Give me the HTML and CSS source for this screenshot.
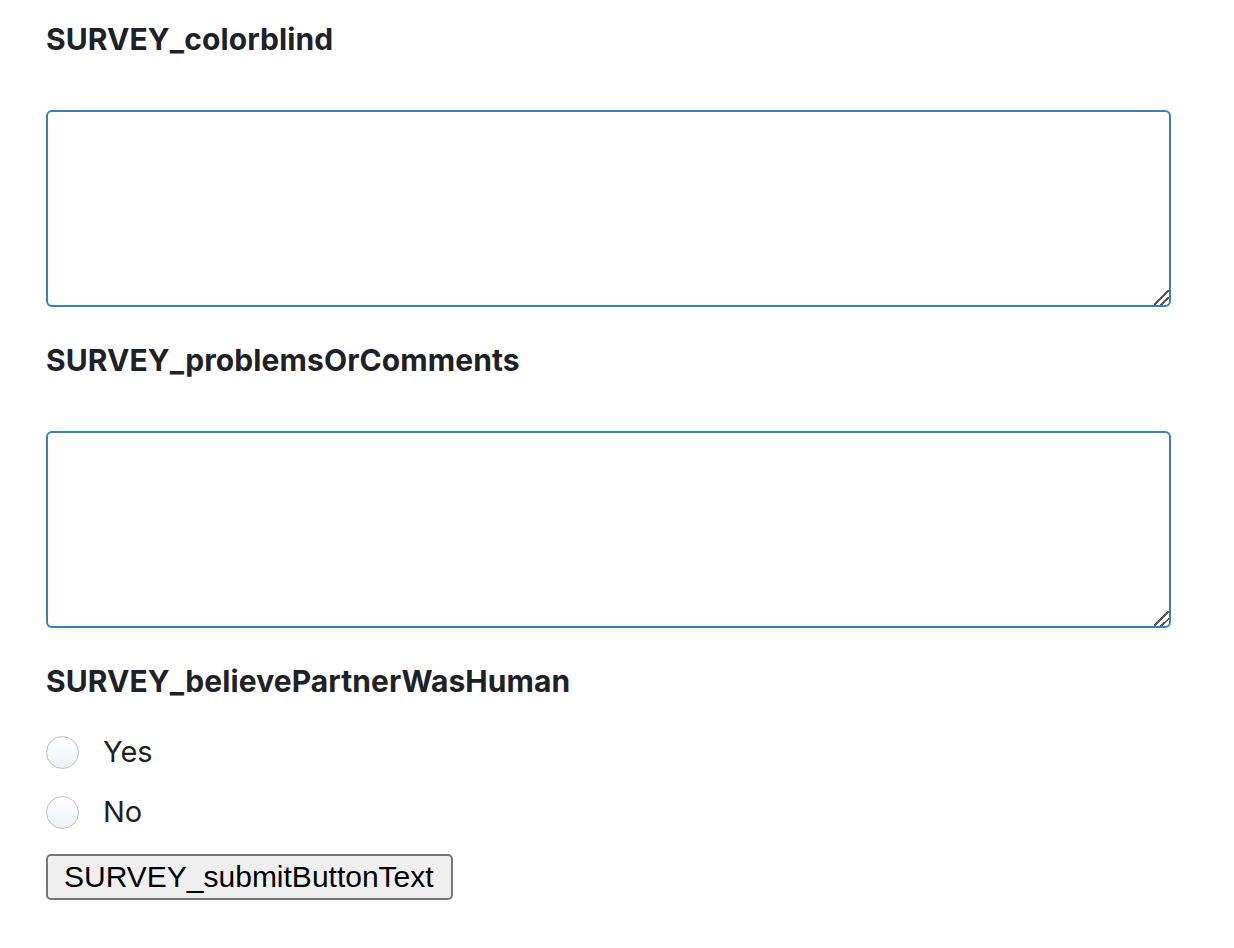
FILE: index.html
```html
<!DOCTYPE html>
<html lang="en">
<head>
<meta charset="utf-8">
<title>Survey</title>
<link rel="stylesheet" href="styles.css">
</head>
<body>
<form class="survey">
  <div class="field">
    <label class="label" for="colorblind">SURVEY_colorblind</label>
    <textarea id="colorblind" class="textbox"></textarea>
  </div>
  <div class="field">
    <label class="label" for="comments">SURVEY_problemsOrComments</label>
    <textarea id="comments" class="textbox"></textarea>
  </div>
  <div class="field">
    <div class="label">SURVEY_believePartnerWasHuman</div>
    <div class="options">
      <label class="option"><input type="radio" name="human" class="radio"><span>Yes</span></label>
      <label class="option"><input type="radio" name="human" class="radio"><span>No</span></label>
    </div>
  </div>
  <button type="button" class="submit">SURVEY_submitButtonText</button>
</form>
</body>
</html>
```
FILE: styles.css
```css
html, body {
  margin: 0;
  padding: 0;
  background: #ffffff;
}
body {
  font-family: Inter, "Liberation Sans", sans-serif;
  color: #1e2226;
}
.survey {
  width: 1125px;
  padding: 21px 0 0 46px;
  display: flex;
  flex-direction: column;
}
.field {
  display: flex;
  flex-direction: column;
}
.label {
  display: block;
  font-weight: 700;
  font-size: 30px;
  line-height: 36px;
  margin-bottom: 53px;
  letter-spacing: 0.1px;
}
.textbox {
  display: block;
  box-sizing: border-box;
  width: 1125px;
  height: 197px;
  border: 2px solid #3b7dbd;
  border-radius: 6px;
  margin: 0 0 35px 0;
  padding: 8px;
  outline: none;
  font-family: inherit;
  font-size: 28px;
}
.textbox::-webkit-resizer {
  background:
    linear-gradient(135deg, transparent 46%, #555 46%, #555 54%, transparent 54%, transparent 70%, #555 70%, #555 78%, transparent 78%);
}
.options {
  display: flex;
  flex-direction: column;
  gap: 24px;
  margin-top: -18px;
}
.option {
  display: flex;
  align-items: center;
  gap: 24px;
  font-size: 29px;
  line-height: 36px;
}
.radio {
  appearance: none;
  -webkit-appearance: none;
  margin: 0;
  width: 33px;
  height: 33px;
  border-radius: 50%;
  border: 1px solid #bdbdbd;
  background: linear-gradient(#ffffff, #eef1f5);
  box-sizing: border-box;
}
.submit {
  align-self: flex-start;
  margin-top: 24px;
  font-family: "Liberation Sans", Arial, sans-serif;
  font-size: 30px;
  color: #000;
  background: #efefef;
  border: 2px solid #767676;
  border-radius: 5px;
  height: 46px;
  padding: 0 17px 0 16px;
}
```
